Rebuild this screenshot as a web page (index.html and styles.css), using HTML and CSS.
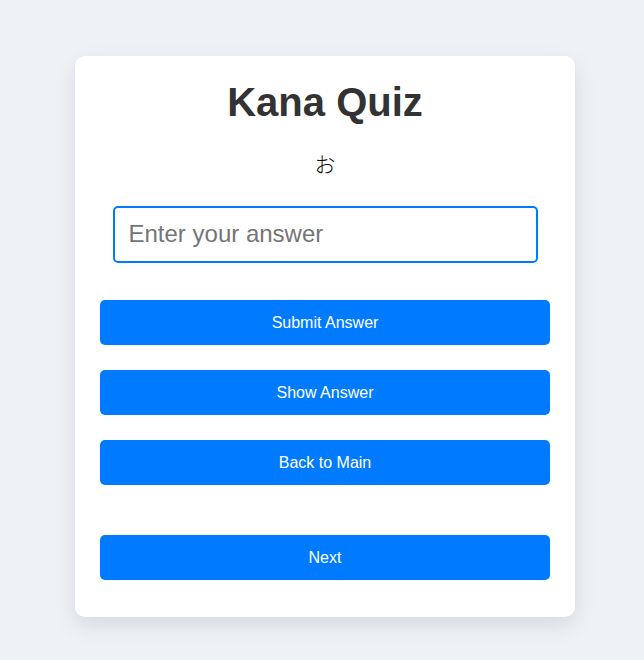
FILE: index.html
```html
<!DOCTYPE html>
<html lang="en">
<head>
<meta charset="utf-8">
<title>Kana Quiz</title>
<link rel="stylesheet" href="styles.css">
</head>
<body>
  <main class="card">
    <h1 class="title">Kana Quiz</h1>
    <div class="kana">お</div>
    <input class="answer" type="text" placeholder="Enter your answer" autofocus>
    <div class="actions">
      <button class="btn">Submit Answer</button>
      <button class="btn">Show Answer</button>
      <button class="btn">Back to Main</button>
    </div>
    <button class="btn next">Next</button>
  </main>
</body>
</html>
```

FILE: styles.css
```css
html, body {
  margin: 0;
  padding: 0;
}

body {
  background: #eef2f7;
  font-family: "Liberation Sans", Arial, sans-serif;
  display: flex;
  flex-direction: column;
  align-items: center;
  padding: 56px 0 0 6px;
  min-height: 660px;
  box-sizing: border-box;
}

.card {
  width: 500px;
  box-sizing: border-box;
  background: #ffffff;
  border-radius: 10px;
  box-shadow: 0 8px 22px rgba(0, 0, 0, 0.1);
  padding: 23px 25px 37px;
  display: flex;
  flex-direction: column;
  align-items: center;
}

.title {
  margin: 0;
  font-size: 40px;
  line-height: 46px;
  font-weight: 700;
  color: #333333;
}

.kana {
  margin-top: 22px;
  font-family: "Noto Sans CJK JP", sans-serif;
  font-size: 21px;
  line-height: 32px;
  font-weight: 300;
  color: #111111;
}

.answer {
  margin-top: 27px;
  width: 425px;
  height: 57px;
  box-sizing: border-box;
  border: 2px solid #007bff;
  border-radius: 5px;
  padding: 0 12px 2px 14px;
  font-family: "Liberation Sans", Arial, sans-serif;
  font-size: 24px;
  color: #333333;
  outline: none;
  caret-color: #000000;
}

.answer::placeholder {
  color: #757575;
}

.actions {
  margin-top: 37px;
  width: 100%;
  display: flex;
  flex-direction: column;
  gap: 25px;
}

.btn {
  width: 100%;
  height: 45px;
  border: none;
  border-radius: 5px;
  background: #007bff;
  color: #ffffff;
  font-family: "Liberation Sans", Arial, sans-serif;
  font-size: 16px;
  cursor: pointer;
}

.next {
  margin-top: 50px;
}
```
